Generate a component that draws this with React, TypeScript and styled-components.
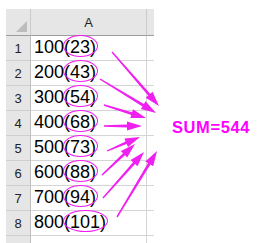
import React from "react";
import { FC } from "react";
import styled, { createGlobalStyle } from "styled-components";

const GlobalStyle = createGlobalStyle`
  html, body {
    margin: 0;
    padding: 0;
    background: #ffffff;
    overflow: hidden;
  }
  body {
    font-family: "Liberation Sans", Arial, sans-serif;
  }
`;

const Page = styled.div`
  position: relative;
  display: flex;
  align-items: flex-start;
  width: 271px;
  height: 243px;
  padding: 9px 0 0 6px;
  box-sizing: border-box;
  overflow: hidden;
`;

const Sheet = styled.div`
  display: grid;
  grid-template-columns: 25px 116px 7px;
  grid-template-rows: 27px repeat(9, 25px);
`;

const Corner = styled.div`
  position: relative;
  background: #e6e6e6;
  border-right: 1px solid #cbcbcb;
  border-bottom: 1px solid #9d9d9d;

  &::after {
    content: "";
    position: absolute;
    right: 3px;
    bottom: 3px;
    width: 0;
    height: 0;
    border-left: 11px solid transparent;
    border-bottom: 11px solid #bcbcbc;
  }
`;

const ColHead = styled.div<{ $last?: boolean }>`
  display: flex;
  align-items: flex-end;
  justify-content: center;
  padding-bottom: 5px;
  background: #e6e6e6;
  border-bottom: 1px solid #9d9d9d;
  border-right: ${(p) => (p.$last ? "none" : "1px solid #cbcbcb")};
  font-size: 13px;
  color: #222;
`;

const RowHead = styled.div`
  display: flex;
  align-items: flex-end;
  justify-content: center;
  padding-bottom: 4px;
  background: #e6e6e6;
  border-right: 1px solid #bdbdbd;
  border-bottom: 1px solid #cfcfcf;
  font-size: 13px;
  color: #222;
`;

const Cell = styled.div<{ $last?: boolean }>`
  display: flex;
  align-items: flex-end;
  padding: 0 0 4px 3px;
  background: #ffffff;
  border-bottom: 1px solid #d4d4d4;
  border-right: ${(p) => (p.$last ? "none" : "1px solid #d4d4d4")};
  font-size: 18px;
  line-height: 18px;
  color: #000;
  white-space: nowrap;
`;

const Circled = styled.span`
  position: relative;

  &::after {
    content: "";
    position: absolute;
    left: -1px;
    right: -2px;
    top: -3px;
    bottom: -1px;
    border: 1px solid #f01cf0;
    border-radius: 50%;
  }
`;

const Total = styled.div`
  padding: 109px 0 0 18px;
  font-size: 16.5px;
  font-weight: bold;
  letter-spacing: 0.6px;
  color: #ff00ff;
`;

const ArrowLayer = styled.svg`
  position: absolute;
  left: 0;
  top: 0;
  pointer-events: none;
`;

const rows = [
  { n: 100, v: 23 },
  { n: 200, v: 43 },
  { n: 300, v: 54 },
  { n: 400, v: 68 },
  { n: 500, v: 73 },
  { n: 600, v: 88 },
  { n: 700, v: 94 },
  { n: 800, v: 101 },
];

const arrows: Array<[number, number, number, number]> = [
  [112, 52, 159, 106],
  [100, 79, 156, 113],
  [104, 105, 146, 118],
  [104, 126, 142, 126],
  [107, 151, 140, 137],
  [102, 175, 135, 144],
  [103, 198, 144, 152],
  [117, 217, 157, 151],
];

const Arrow: FC<{ a: [number, number, number, number] }> = ({ a }) => {
  const [x1, y1, x2, y2] = a;
  const dx = x2 - x1;
  const dy = y2 - y1;
  const len = Math.hypot(dx, dy);
  const ux = dx / len;
  const uy = dy / len;
  const nx = -uy;
  const ny = ux;
  const head = 15;
  const hw = 4.6;
  const sw = 1.4;
  const tail = 0.7;
  const bx = x2 - ux * head;
  const by = y2 - uy * head;
  const pts = [
    [x1 + nx * tail, y1 + ny * tail],
    [bx + nx * sw, by + ny * sw],
    [bx + nx * hw, by + ny * hw],
    [x2, y2],
    [bx - nx * hw, by - ny * hw],
    [bx - nx * sw, by - ny * sw],
    [x1 - nx * tail, y1 - ny * tail],
  ]
    .map((p) => `${p[0].toFixed(1)},${p[1].toFixed(1)}`)
    .join(" ");
  return <polygon points={pts} fill="#f020f0" />;
};

export default function App() {
  return (
    <>
      <GlobalStyle />
      <Page>
        <Sheet>
          <Corner />
          <ColHead>A</ColHead>
          <ColHead $last />
          {rows.map((r, i) => (
            <React.Fragment key={r.n}>
              <RowHead>{i + 1}</RowHead>
              <Cell>
                {r.n}
                <Circled>({r.v})</Circled>
              </Cell>
              <Cell $last />
            </React.Fragment>
          ))}
          <RowHead />
          <Cell />
          <Cell $last />
        </Sheet>
        <Total>SUM=544</Total>
        <ArrowLayer width="271" height="243" viewBox="0 0 271 243">
          {arrows.map((a, i) => (
            <Arrow key={i} a={a} />
          ))}
        </ArrowLayer>
      </Page>
    </>
  );
}
